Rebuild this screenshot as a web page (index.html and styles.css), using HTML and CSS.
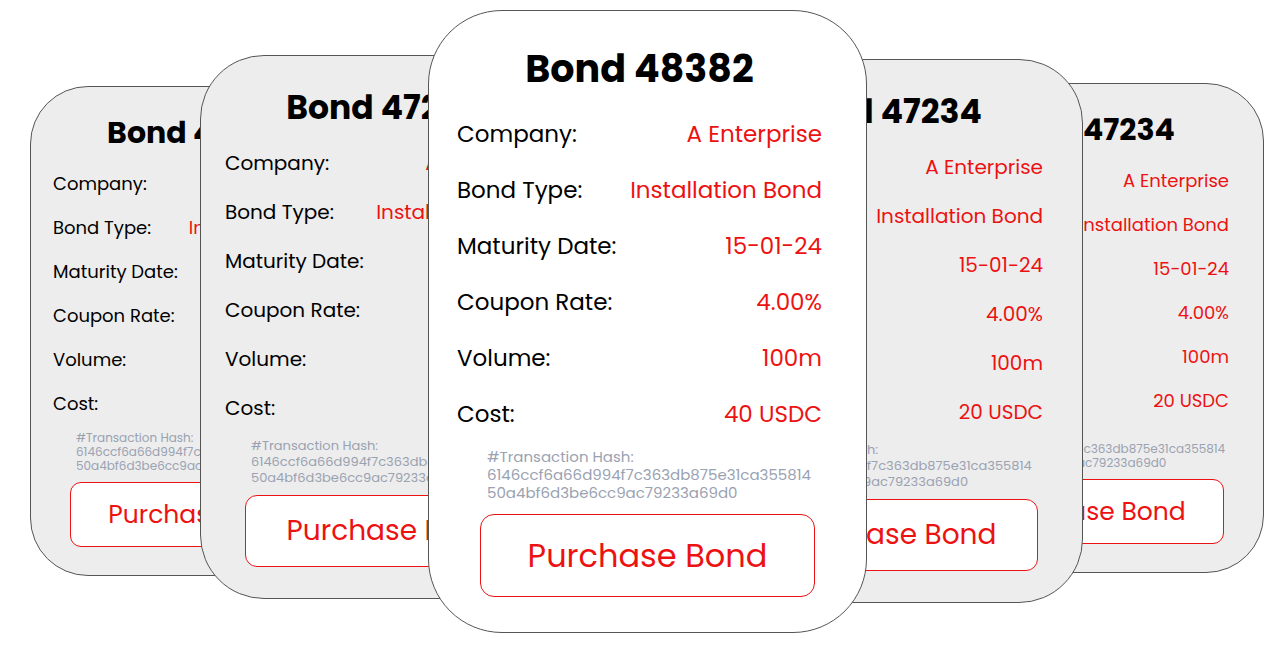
FILE: index.html
```html
<!DOCTYPE html>
<html lang="en">
<head>
<meta charset="utf-8">
<meta name="viewport" content="width=device-width, initial-scale=1">
<title>Bonds</title>
<link rel="stylesheet" href="styles.css">
</head>
<body>
<main class="carousel">
  <article class="card card-small slot-1">
    <h2 class="title">Bond 47234</h2>
    <dl class="facts">
      <div class="fact"><dt>Company:</dt><dd>A Enterprise</dd></div>
      <div class="fact"><dt>Bond Type:</dt><dd>Installation Bond</dd></div>
      <div class="fact"><dt>Maturity Date:</dt><dd>15-01-24</dd></div>
      <div class="fact"><dt>Coupon Rate:</dt><dd>4.00%</dd></div>
      <div class="fact"><dt>Volume:</dt><dd>100m</dd></div>
      <div class="fact"><dt>Cost:</dt><dd>20 USDC</dd></div>
    </dl>
    <p class="hash">#Transaction Hash:<br>6146ccf6a66d994f7c363db875e31ca355814<br>50a4bf6d3be6cc9ac79233a69d0</p>
    <button class="buy" type="button">Purchase Bond</button>
  </article>
  <article class="card card-medium slot-2">
    <h2 class="title">Bond 47234</h2>
    <dl class="facts">
      <div class="fact"><dt>Company:</dt><dd>A Enterprise</dd></div>
      <div class="fact"><dt>Bond Type:</dt><dd>Installation Bond</dd></div>
      <div class="fact"><dt>Maturity Date:</dt><dd>15-01-24</dd></div>
      <div class="fact"><dt>Coupon Rate:</dt><dd>4.00%</dd></div>
      <div class="fact"><dt>Volume:</dt><dd>100m</dd></div>
      <div class="fact"><dt>Cost:</dt><dd>20 USDC</dd></div>
    </dl>
    <p class="hash">#Transaction Hash:<br>6146ccf6a66d994f7c363db875e31ca355814<br>50a4bf6d3be6cc9ac79233a69d0</p>
    <button class="buy" type="button">Purchase Bond</button>
  </article>
  <article class="card card-large slot-3">
    <h2 class="title">Bond 48382</h2>
    <dl class="facts">
      <div class="fact"><dt>Company:</dt><dd>A Enterprise</dd></div>
      <div class="fact"><dt>Bond Type:</dt><dd>Installation Bond</dd></div>
      <div class="fact"><dt>Maturity Date:</dt><dd>15-01-24</dd></div>
      <div class="fact"><dt>Coupon Rate:</dt><dd>4.00%</dd></div>
      <div class="fact"><dt>Volume:</dt><dd>100m</dd></div>
      <div class="fact"><dt>Cost:</dt><dd>40 USDC</dd></div>
    </dl>
    <p class="hash">#Transaction Hash:<br>6146ccf6a66d994f7c363db875e31ca355814<br>50a4bf6d3be6cc9ac79233a69d0</p>
    <button class="buy" type="button">Purchase Bond</button>
  </article>
  <article class="card card-medium slot-4">
    <h2 class="title">Bond 47234</h2>
    <dl class="facts">
      <div class="fact"><dt>Company:</dt><dd>A Enterprise</dd></div>
      <div class="fact"><dt>Bond Type:</dt><dd>Installation Bond</dd></div>
      <div class="fact"><dt>Maturity Date:</dt><dd>15-01-24</dd></div>
      <div class="fact"><dt>Coupon Rate:</dt><dd>4.00%</dd></div>
      <div class="fact"><dt>Volume:</dt><dd>100m</dd></div>
      <div class="fact"><dt>Cost:</dt><dd>20 USDC</dd></div>
    </dl>
    <p class="hash">#Transaction Hash:<br>6146ccf6a66d994f7c363db875e31ca355814<br>50a4bf6d3be6cc9ac79233a69d0</p>
    <button class="buy" type="button">Purchase Bond</button>
  </article>
  <article class="card card-small slot-5">
    <h2 class="title">Bond 47234</h2>
    <dl class="facts">
      <div class="fact"><dt>Company:</dt><dd>A Enterprise</dd></div>
      <div class="fact"><dt>Bond Type:</dt><dd>Installation Bond</dd></div>
      <div class="fact"><dt>Maturity Date:</dt><dd>15-01-24</dd></div>
      <div class="fact"><dt>Coupon Rate:</dt><dd>4.00%</dd></div>
      <div class="fact"><dt>Volume:</dt><dd>100m</dd></div>
      <div class="fact"><dt>Cost:</dt><dd>20 USDC</dd></div>
    </dl>
    <p class="hash">#Transaction Hash:<br>6146ccf6a66d994f7c363db875e31ca355814<br>50a4bf6d3be6cc9ac79233a69d0</p>
    <button class="buy" type="button">Purchase Bond</button>
  </article>
</main>
</body>
</html>
```
FILE: styles.css
```css
* {
  box-sizing: border-box;
}

body {
  margin: 0;
  background: #fff;
  color: #000;
  font-family: Poppins, Inter, "Open Sans", sans-serif;
}

/* Neighbouring cards span shared columns, so they overlap. */
.carousel {
  display: grid;
  grid-template-columns: 170fr 174fr 54fr 155fr 117fr 167fr 53fr 163fr 181fr;
  align-items: start;
  padding: 10px 16px 24px 30px;
}

.card {
  grid-row: 1;
  min-width: 0;
  display: flex;
  flex-direction: column;
  border: 1px solid #555;
  background: #ededed;
  white-space: nowrap;
}

.slot-1 { grid-column: 1 / 3; margin-top: 76px; z-index: 1; }
.slot-2 { grid-column: 2 / 5; margin-top: 45px; z-index: 2; }
.slot-3 { grid-column: 4 / 7; z-index: 3; }
.slot-4 { grid-column: 6 / 9; margin-top: 49px; z-index: 2; }
.slot-5 { grid-column: 8 / 10; margin-top: 73px; z-index: 1; }

.card-large {
  --title: 38px;
  --text: 23px;
  --row: 56px;
  --small: 15px;
  --small-line: 18px;
  --action: 32px;
  --action-height: 83px;
  --left: 28px;
  --right: 44px;
  --facts-top: 9px;
  --hash-top: 6px;
  --hash-left: 58px;
  --buy-top: 12px;
  --buy-side: 51px;
  --corner: 14px;
  padding: 30px 0 35px;
  border-radius: 74px;
  background: #fff;
}

.card-medium {
  --title: 33px;
  --text: 20px;
  --row: 49px;
  --small: 13px;
  --small-line: 16px;
  --action: 28px;
  --action-height: 72px;
  --left: 24px;
  --right: 39px;
  --facts-top: 7px;
  --hash-top: 5px;
  --hash-left: 50px;
  --buy-top: 9px;
  --buy-side: 44px;
  --corner: 12px;
  padding: 27px 0 31px;
  border-radius: 64px;
}

.card-small {
  --title: 30px;
  --text: 18px;
  --row: 44px;
  --small: 12px;
  --small-line: 14px;
  --action: 25px;
  --action-height: 65px;
  --left: 22px;
  --right: 34px;
  --facts-top: 7px;
  --hash-top: 5px;
  --hash-left: 45px;
  --buy-top: 9px;
  --buy-side: 39px;
  --corner: 11px;
  padding: 24px 0 28px;
  border-radius: 58px;
}

.title {
  margin: 0;
  padding: 0 var(--right) 0 var(--left);
  font-size: var(--title);
  line-height: var(--row);
  font-weight: 700;
  text-align: center;
}

.facts {
  margin: var(--facts-top) 0 0;
  padding: 0 var(--right) 0 var(--left);
  font-size: var(--text);
  line-height: var(--row);
}

.fact {
  display: flex;
  justify-content: space-between;
}

.fact dd {
  margin: 0;
  color: #ec1212;
}

.hash {
  margin: var(--hash-top) 0 0 var(--hash-left);
  color: #9aa2b1;
  font-size: var(--small);
  line-height: var(--small-line);
}

.buy {
  height: var(--action-height);
  margin: var(--buy-top) var(--buy-side) 0;
  padding: 0;
  border: 1px solid #ec1212;
  border-radius: var(--corner);
  background: #fff;
  color: #ec1212;
  font: inherit;
  font-size: var(--action);
  cursor: pointer;
}
```
